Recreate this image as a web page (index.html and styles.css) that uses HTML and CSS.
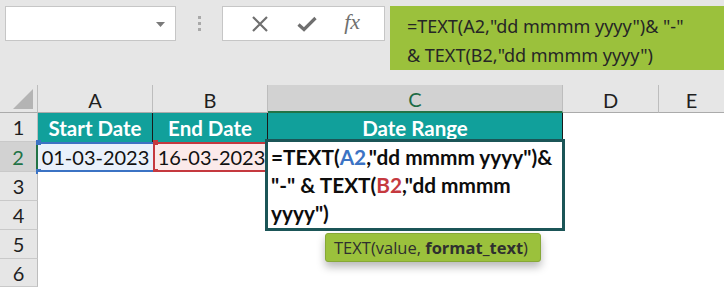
FILE: index.html
```html
<!DOCTYPE html>
<html>
<head>
<meta charset="utf-8">
<link rel="stylesheet" href="styles.css">
</head>
<body>
<div class="topbar">
  <div class="namebox">
    <svg class="dd" width="9" height="5" viewBox="0 0 9 5"><path d="M0 0H9L4.5 5Z" fill="#7a7a7a"/></svg>
  </div>
  <div class="grip"><span></span><span></span><span></span></div>
  <div class="fbuttons">
    <svg width="18" height="18" viewBox="0 0 18 18"><path d="M2 2L16 16M16 2L2 16" stroke="#6f6f6f" stroke-width="2.2" fill="none"/></svg>
    <svg width="20" height="16" viewBox="0 0 20 16"><path d="M1.5 8.5L7 13.5L18.5 2" stroke="#6f6f6f" stroke-width="3.2" fill="none"/></svg>
    <span class="fx">fx</span>
  </div>
  <div class="formula">=TEXT(A2,"dd mmmm yyyy")&amp; "-"<br>&amp; TEXT(B2,"dd mmmm yyyy")</div>
</div>

<div class="sheet">
  <div class="corner"><span class="tri"></span></div>
  <div class="ch">A</div>
  <div class="ch">B</div>
  <div class="ch sel">C</div>
  <div class="ch">D</div>
  <div class="ch last">E</div>

  <div class="rh">1</div>
  <div class="cell head bk">Start Date</div>
  <div class="cell head bk">End Date</div>
  <div class="cell head bk">Date Range</div>
  <div class="cell"></div>
  <div class="cell"></div>

  <div class="rh sel">2</div>
  <div class="cell val blue">01-03-2023<i class="h tl"></i><i class="h bl"></i></div>
  <div class="cell val red">16-03-2023<i class="h tl"></i><i class="h bl"></i><i class="h tr"></i><i class="h br"></i></div>
  <div class="cell"></div>
  <div class="cell"></div>
  <div class="cell"></div>

  <div class="rh">3</div><div class="cell"></div><div class="cell"></div><div class="cell"></div><div class="cell"></div><div class="cell"></div>
  <div class="rh">4</div><div class="cell"></div><div class="cell"></div><div class="cell"></div><div class="cell"></div><div class="cell"></div>
  <div class="rh">5</div><div class="cell"></div><div class="cell"></div><div class="cell"></div><div class="cell"></div><div class="cell"></div>
  <div class="rh">6</div><div class="cell"></div><div class="cell"></div><div class="cell"></div><div class="cell"></div><div class="cell"></div>

  <div class="editor">=TEXT(<span class="ra">A2</span>,"dd mmmm yyyy")&amp;<br>"-" &amp; TEXT(<span class="rb">B2</span>,"dd mmmm<br>yyyy")</div>
  <div class="tip"><span>TEXT(value, <b>format_text</b>)</span></div>
</div>
</body>
</html>
```

FILE: styles.css
```css
* { box-sizing: border-box; }
html, body { margin: 0; padding: 0; }
body {
  width: 724px;
  height: 287px;
  overflow: hidden;
  background: #fff;
  font-family: "Open Sans", "Noto Sans", sans-serif;
}

.topbar {
  height: 85px;
  background: #e6e6e6;
  display: flex;
  align-items: flex-start;
  padding: 6px 0 0 5px;
}
.namebox {
  width: 171px;
  height: 35px;
  background: #fff;
  border: 1px solid #c6c6c6;
  display: flex;
  align-items: center;
  justify-content: flex-end;
  padding-right: 10px;
}
.dd { margin-top: 1px; }
.grip {
  width: 46px;
  height: 35px;
  display: flex;
  flex-direction: column;
  align-items: center;
  justify-content: center;
  gap: 3px;
}
.grip span { width: 3px; height: 3px; background: #a9a9a9; }
.fbuttons {
  width: 163px;
  height: 35px;
  background: #fff;
  border: 1px solid #c6c6c6;
  display: flex;
  align-items: center;
  justify-content: space-around;
  padding: 0 10px 0 14px;
}
.fx {
  font-family: "Liberation Serif", "DejaVu Serif", serif;
  font-style: italic;
  font-size: 22px;
  color: #6f6f6f;
  margin-top: -3px;
}
.formula {
  flex: 1;
  height: 64px;
  margin-left: 5px;
  background: #9bc13c;
  color: #262626;
  font-family: "Noto Sans", "Open Sans", sans-serif;
  font-size: 18px;
  line-height: 29px;
  padding: 6px 0 0 17px;
  white-space: nowrap;
}

.sheet {
  position: relative;
  display: grid;
  grid-template-columns: 38px 115px 115px 295px 96px 1fr;
  grid-template-rows: 28px 29px 30px 29px 29px 29px 1fr;
  height: 202px;
  font-family: Lato, "Open Sans", sans-serif;
}
.corner {
  background: #e6e6e6;
  border-right: 1px solid #bdbdbd;
  border-bottom: 1px solid #ababab;
  position: relative;
}
.tri {
  position: absolute;
  right: 4px;
  bottom: 3px;
  width: 0;
  height: 0;
  border-left: 20px solid transparent;
  border-bottom: 20px solid #b4b4b4;
}
.ch {
  background: #e6e6e6;
  border-right: 1px solid #bdbdbd;
  border-bottom: 1px solid #ababab;
  display: flex;
  align-items: center;
  justify-content: center;
  font-size: 20px;
  color: #1f1f1f;
  padding-top: 2px;
}
.ch.sel {
  background: #d2d2d2;
  color: #1c6b45;
  border-bottom: 2px solid #217346;
}
.ch.last { border-right: 0; }
.rh {
  background: #e6e6e6;
  border-right: 1px solid #bdbdbd;
  border-bottom: 1px solid #c9c9c9;
  display: flex;
  align-items: center;
  justify-content: center;
  font-size: 20px;
  color: #1f1f1f;
}
.rh.sel {
  background: #d2d2d2;
  color: #217346;
  border-right: 2px solid #217346;
}
.cell {
  background: #fff;
  position: relative;
}
.cell.head {
  background: #11a09b;
  color: #fff;
  font-weight: 700;
  font-size: 20.5px;
  display: flex;
  align-items: center;
  justify-content: center;
}
.cell.bk { border-right: 1px solid #1a1a1a; }
.cell.val {
  display: flex;
  align-items: center;
  justify-content: center;
  font-size: 20px;
  color: #111;
}
.cell.blue {
  background: #e9f1fb;
  border-top: 2px solid #3b73c4;
  border-bottom: 2px solid #3b73c4;
}
.cell.red {
  background: #fbeaea;
  border: 2px solid #c5393f;
  border-right: 0;
}
.h {
  position: absolute;
  width: 5px;
  height: 5px;
}
.blue .h { background: #3b73c4; }
.red .h { background: #c5393f; }
.h.tl { left: -2px; top: -4px; }
.h.bl { left: -2px; bottom: -4px; }
.h.tr { right: -3px; top: -4px; }
.h.br { right: -3px; bottom: -4px; }

.editor {
  position: absolute;
  left: 265px;
  top: 54px;
  width: 300px;
  height: 92px;
  border: 3px solid #1b5557;
  background: #fff;
  font-family: Lato, "Open Sans", sans-serif;
  font-weight: 700;
  font-size: 20.8px;
  line-height: 28px;
  color: #0d0d0d;
  padding: 1px 0 0 3px;
  white-space: nowrap;
}
.ra { color: #3b73c4; }
.rb { color: #c5393f; }
.tip {
  position: absolute;
  left: 325px;
  top: 148px;
  width: 216px;
  height: 29px;
  background: #9bc13c;
  border: 1px solid #86a836;
  border-radius: 3px;
  box-shadow: 0 5px 9px rgba(0, 0, 0, 0.28);
  font-family: "Open Sans", "Noto Sans", sans-serif;
  font-size: 16.5px;
  color: #2f2f2f;
  display: flex;
  align-items: center;
  padding-left: 8px;
  white-space: nowrap;
}
.tip b { font-weight: 700; }
```
